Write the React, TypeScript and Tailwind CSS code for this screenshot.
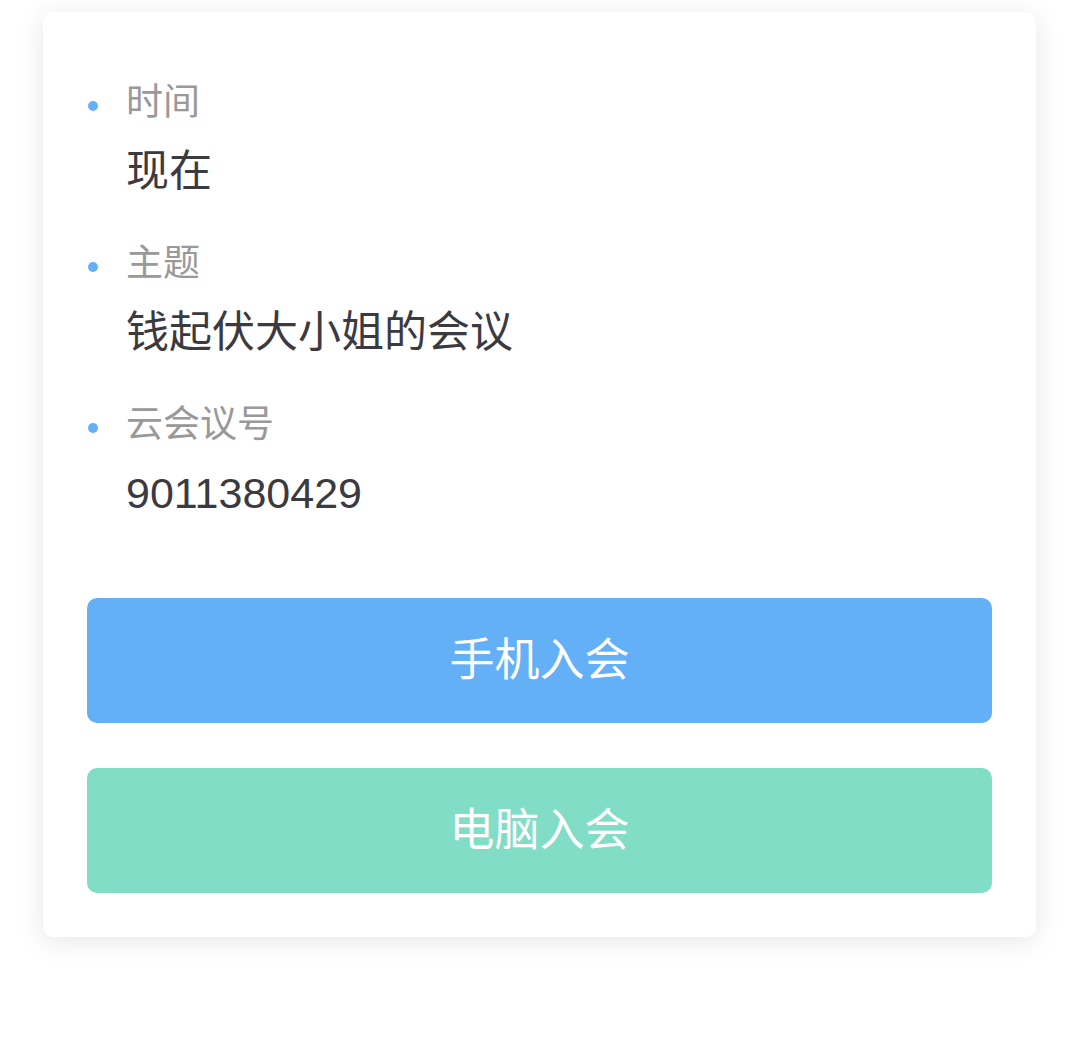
const items = [
  { label: '时间', value: '现在' },
  { label: '主题', value: '钱起伏大小姐的会议' },
  { label: '云会议号', value: '9011380429' },
];

export default function App() {
  return (
    <div
      className="min-h-[1044px] w-[1080px] bg-white pt-[12px]"
      style={{ fontFamily: '"Helvetica Neue", "Liberation Sans", "Noto Sans CJK SC", sans-serif' }}
    >
      <div className="ml-[43px] w-[993px] rounded-[10px] bg-white px-[44px] pb-[44px] pt-[67px] shadow-[0_4px_26px_rgba(0,0,0,0.1)]">
        <div className="flex flex-col gap-[39px]">
          {items.map((item) => (
            <InfoItem key={item.label} label={item.label} value={item.value} />
          ))}
        </div>
        <div className="mt-[75px] flex flex-col gap-[45px]">
          <button className="h-[125px] w-full rounded-[10px] bg-[#64b0f7] text-[45px] text-white">
            手机入会
          </button>
          <button className="h-[125px] w-full rounded-[10px] bg-[#82ddc6] text-[45px] text-white">
            电脑入会
          </button>
        </div>
      </div>
    </div>
  );
}

function InfoItem({ label, value }: { label: string; value: string }) {
  return (
    <div>
      <div className="flex items-center">
        <span className="ml-[1px] mt-[6px] h-[10px] w-[10px] rounded-full bg-[#64b0f7]" />
        <span className="ml-[28px] text-[37px] leading-[48px] text-[#999999]">{label}</span>
      </div>
      <div className="mt-[14px] pl-[39px] text-[43px] leading-[60px] text-[#3a3a3f]">{value}</div>
    </div>
  );
}
